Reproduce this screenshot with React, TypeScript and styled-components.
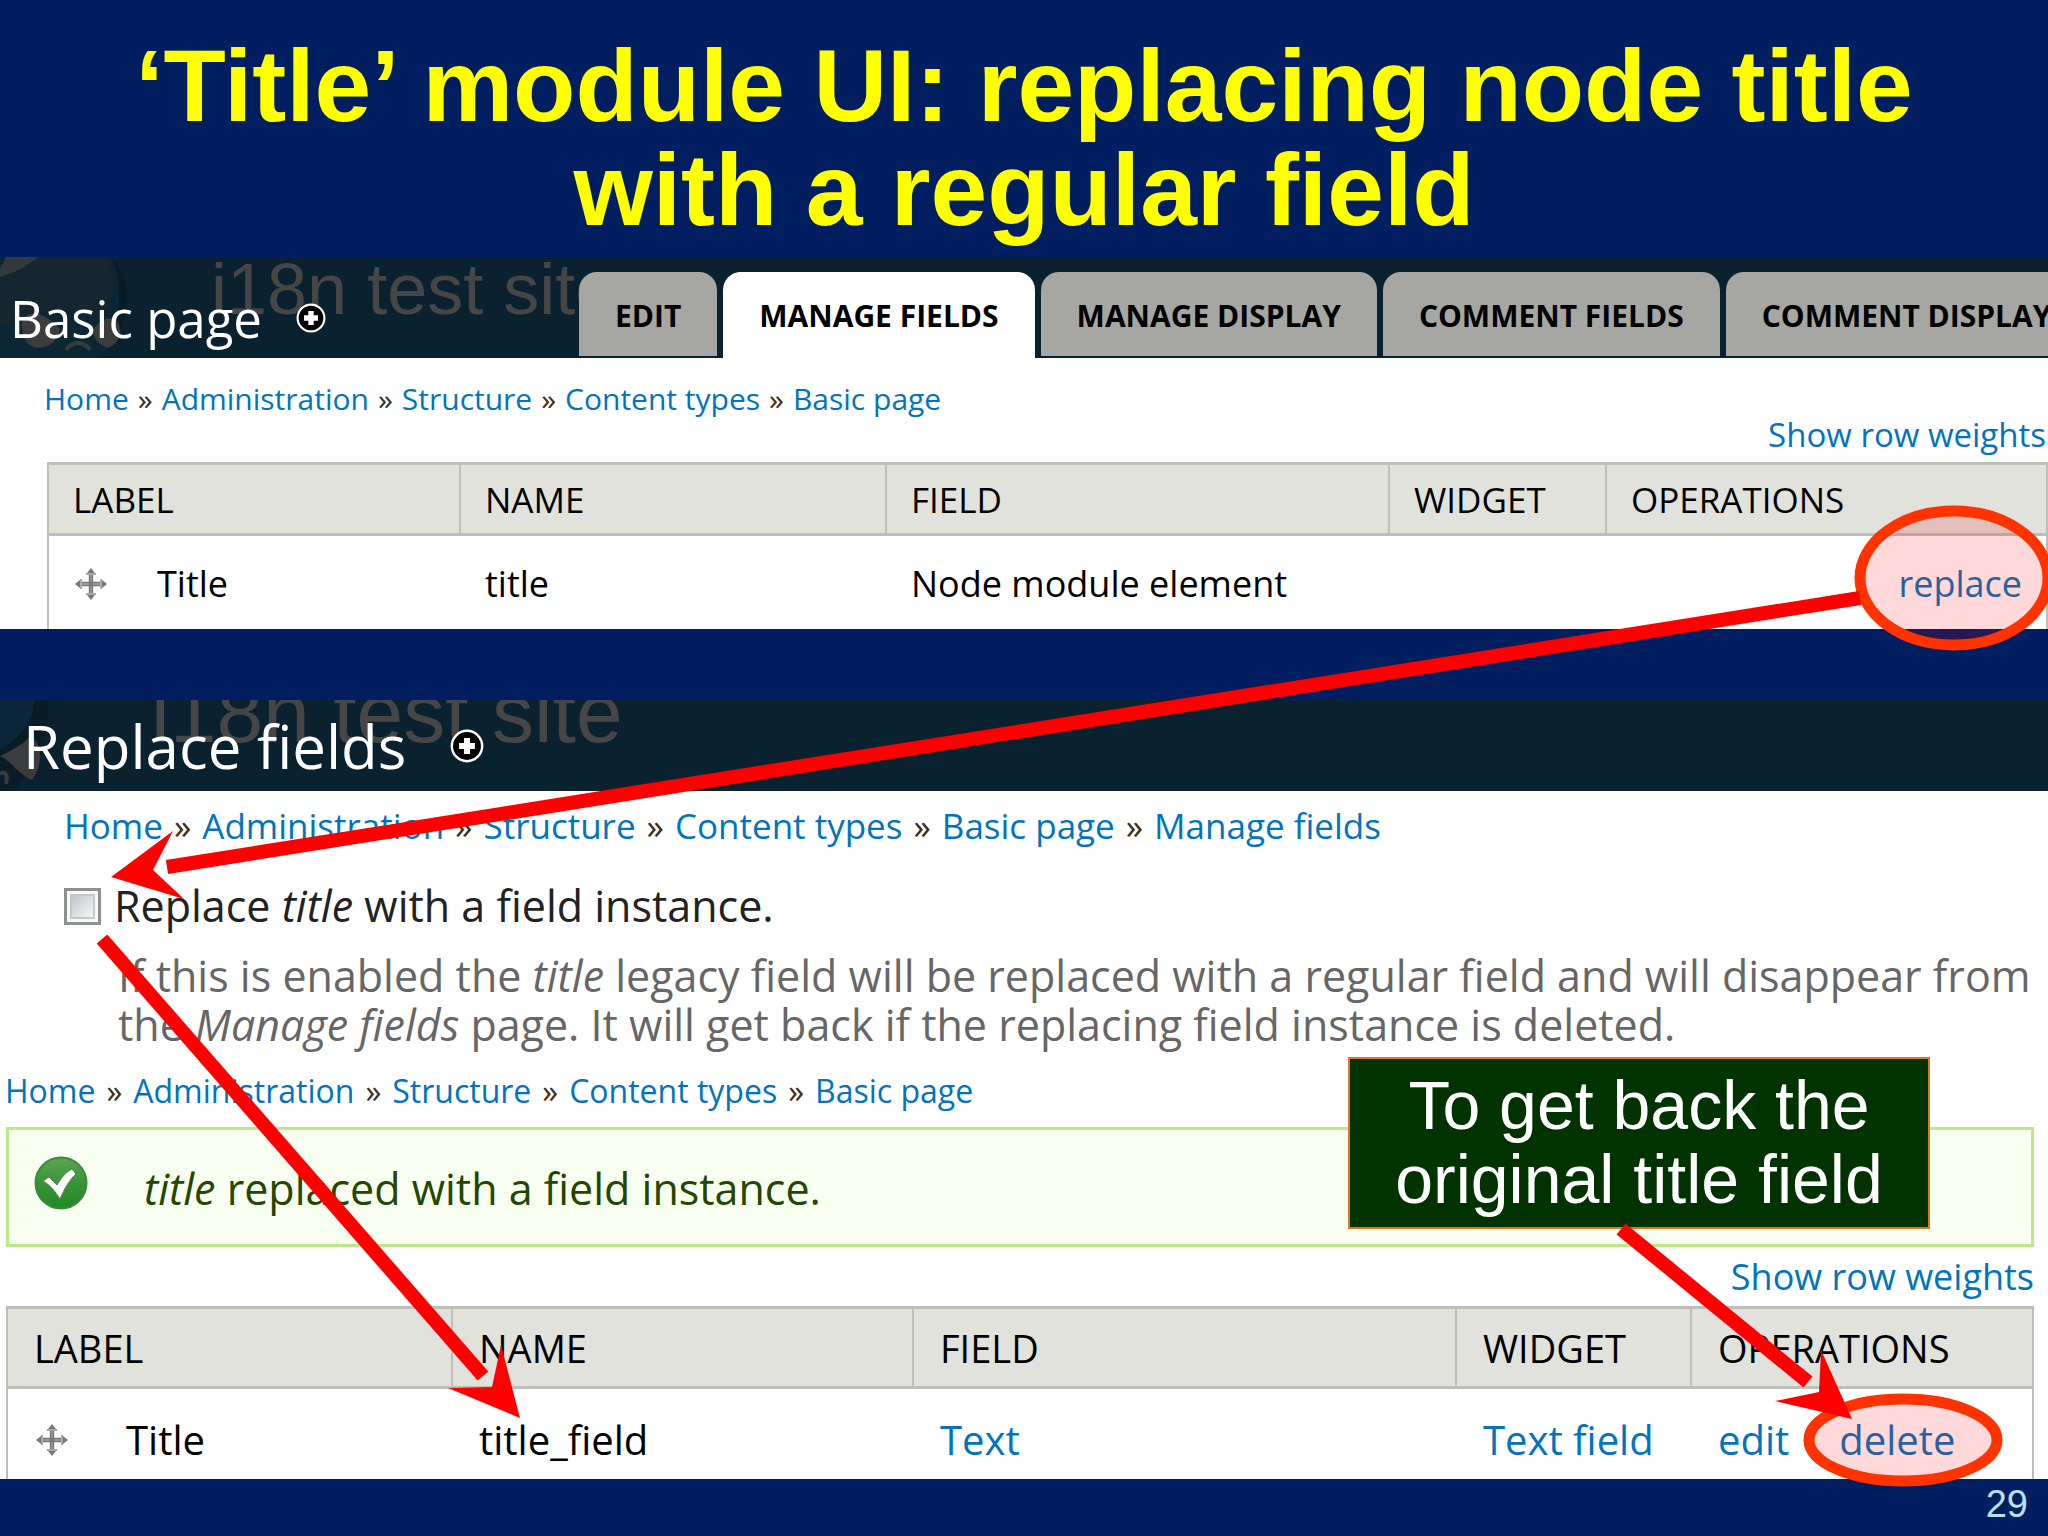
import React from "react";
import styled, { createGlobalStyle } from "styled-components";

const GlobalStyle = createGlobalStyle`
  *, *::before, *::after { box-sizing: border-box; }
  body { margin: 0; background: #001e60; }
`;

const ui = `"Open Sans", "Noto Sans", sans-serif`;
const arial = `"Liberation Sans", Arial, sans-serif`;

const Slide = styled.main`
  position: relative;
  min-height: 100vh;
  display: flex;
  flex-direction: column;
  overflow: hidden;
  background: #001e60;
  font-family: ${ui};
  color: #000;
`;

const SlideTitle = styled.h1`
  margin: 0;
  padding: 34px 80px 15px;
  font: bold 102px/104px ${arial};
  color: #ffff00;
  text-align: center;
`;

const Panel = styled.section<{ $gap?: number }>`
  position: relative;
  margin-top: ${(p) => p.$gap ?? 0}px;
  background: #fff;
`;

const Bar = styled.header<{ $height: number }>`
  position: relative;
  display: flex;
  align-items: flex-end;
  height: ${(p) => p.$height}px;
  overflow: hidden;
  background: #0a2230;
`;

const SiteName = styled.span<{ $left: number; $top: number; $size: number }>`
  position: absolute;
  left: ${(p) => p.$left}px;
  top: ${(p) => p.$top}px;
  font: ${(p) => p.$size}px/80px ${arial};
  color: #464646;
  white-space: nowrap;
`;

const Mascot = styled.svg`
  position: absolute;
  left: 0;
  top: 0;
`;

const BarHeading = styled.div<{ $large?: boolean }>`
  position: relative;
  display: flex;
  align-items: center;
  flex: 0 0 579px;
  gap: ${(p) => (p.$large ? 44 : 34)}px;
  padding: ${(p) => (p.$large ? "0 0 12px 23px" : "0 0 12px 10px")};
`;

const PageName = styled.h2<{ $large?: boolean }>`
  margin: 0;
  font-size: ${(p) => (p.$large ? 60 : 51)}px;
  line-height: ${(p) => (p.$large ? 66 : 56)}px;
  font-weight: 400;
  color: #fff;
  white-space: nowrap;
`;

const IconButton = styled.button`
  display: flex;
  padding: 0;
  border: 0;
  background: none;
`;

const Tabs = styled.nav`
  position: relative;
  display: flex;
  gap: 6px;
  height: 86px;
`;

const Tab = styled.a<{ $active?: boolean }>`
  flex: none;
  height: ${(p) => (p.$active ? 86 : 84)}px;
  padding: 0 36px;
  border-radius: 18px 18px 0 0;
  background: ${(p) => (p.$active ? "#fff" : "#a6a7a2")};
  color: #000;
  font-size: 30px;
  line-height: 87px;
  font-weight: 700;
  text-decoration: none;
  white-space: nowrap;
`;

const Crumbs = styled.nav<{ $size: number; $pad: string; $gap: number }>`
  display: flex;
  gap: ${(p) => p.$gap}px;
  padding: ${(p) => p.$pad};
  font-size: ${(p) => p.$size}px;
  line-height: 36px;
  color: #3b3020;
  white-space: nowrap;
`;

const Link = styled.a`
  color: #0074bd;
  text-decoration: none;
`;

const Weights = styled.div<{ $size: number; $pad: string }>`
  padding: ${(p) => p.$pad};
  font-size: ${(p) => p.$size}px;
  line-height: 36px;
  text-align: right;
`;

const TableWrap = styled.div<{ $pad: string }>`
  padding: ${(p) => p.$pad};
`;

const Table = styled.table<{ $large?: boolean }>`
  width: 100%;
  table-layout: fixed;
  border-collapse: separate;
  border-spacing: 0;
  border: 2px solid #bebfb9;
  border-width: 0 2px;

  th,
  td {
    padding: 0 ${(p) => (p.$large ? 26 : 24)}px;
    text-align: left;
    font-weight: 400;
    white-space: nowrap;
  }
  th {
    height: ${(p) => (p.$large ? 83 : 74)}px;
    border: solid #bebfb9;
    border-width: 3px 0 3px 2px;
    background: #e1e2dc;
    font-size: ${(p) => (p.$large ? 38 : 35)}px;
    text-transform: uppercase;
  }
  th:first-child {
    border-left: 0;
  }
  td {
    height: ${(p) => (p.$large ? 90 : 93)}px;
    padding-top: ${(p) => (p.$large ? 12 : 2)}px;
    padding-left: ${(p) => (p.$large ? 28 : 26)}px;
    font-size: ${(p) => (p.$large ? 40 : 36)}px;
    line-height: 50px;
  }
`;

const Col = styled.col<{ $width?: number }>`
  width: ${(p) => (p.$width ? `${p.$width}px` : "auto")};
`;

const LabelCell = styled.div<{ $gap: number }>`
  display: flex;
  align-items: center;
  gap: ${(p) => p.$gap}px;
`;

const Operations = styled.div<{ $end?: boolean }>`
  display: flex;
  gap: 50px;
  justify-content: ${(p) => (p.$end ? "flex-end" : "flex-start")};
`;

const CheckRow = styled.div`
  display: flex;
  align-items: center;
  gap: 13px;
  padding: 37px 0 0 64px;
  color: #222;
  font-size: 43px;
  line-height: 50px;
`;

const Checkbox = styled.input`
  appearance: none;
  width: 37px;
  height: 37px;
  margin: 0;
  border: 3px solid #8e8f8f;
  background: linear-gradient(135deg, #b4b9bf, #f4f4f4 80%);
  box-shadow: inset 0 0 0 3px #f8f8f8, inset 0 0 0 5px #c4c8cc;
`;

const Help = styled.p`
  margin: 0;
  padding: 20px 10px 0 118px;
  color: #666;
  font-size: 43px;
  line-height: 49px;
`;

const Status = styled.div`
  display: flex;
  align-items: flex-start;
  gap: 56px;
  height: 120px;
  margin: 18px 14px 0 6px;
  padding: 26px 0 0 25px;
  border: 3px solid #bce88a;
  background: #f8fff0;
  color: #234600;
  font-size: 43px;
  line-height: 65px;
`;

const Callout = styled.aside`
  position: absolute;
  right: 118px;
  bottom: 250px;
  width: 582px;
  padding: 9px 0 11px;
  border: 2px solid #e07820;
  background: #003300;
  color: #fff;
  font: 68px/74px ${arial};
  text-align: center;
`;

const Annotations = styled.svg`
  position: absolute;
  left: 0;
  top: 0;
  width: 100%;
  height: auto;
  pointer-events: none;
`;

const SlideFooter = styled.footer`
  padding: 5px 20px 11px;
  font: 38px/40px ${arial};
  color: #b9e0ee;
  text-align: right;
`;

const PlusIcon = ({ size }: { size: number }) => (
  <svg width={size} height={size} viewBox="0 0 28 28" aria-hidden="true">
    <circle cx="14" cy="14" r="12.5" fill="#000" stroke="#fff" strokeWidth="2" />
    <path d="M14 7.5v13M7.5 14h13" stroke="#fff" strokeWidth="5" />
  </svg>
);

const DragIcon = () => (
  <svg width="32" height="32" viewBox="0 0 32 32" aria-hidden="true">
    <g fill="none" stroke="#777" strokeWidth="2">
      <path d="M14.8 4v24M17.2 4v24M4 14.8h24M4 17.2h24" />
      <path d="M11 6h10M11 26h10M6 11v10M26 11v10" stroke="#a8a8a8" />
    </g>
    <path d="M16 0l4 5h-8zM16 32l4-5h-8zM0 16l5-4v8zM32 16l-5-4v8z" fill="#777" />
  </svg>
);

const OkIcon = () => (
  <svg width="54" height="54" viewBox="0 0 54 54" aria-hidden="true">
    <defs>
      <linearGradient id="ok" x1="0" y1="0" x2="0" y2="1">
        <stop offset="0" stopColor="#5aa552" />
        <stop offset="0.5" stopColor="#3b9338" />
        <stop offset="1" stopColor="#1f8a1f" />
      </linearGradient>
    </defs>
    <circle cx="27" cy="27" r="25.5" fill="url(#ok)" stroke="#3d8a3a" strokeWidth="2" />
    <path d="M9 25l6-4 8 8C27 22 32 16 38 13l4 5C35 24 31 32 26 43C21 35 16 29 9 25z" fill="#fff" stroke="#5d7f5a" strokeWidth="1" />
  </svg>
);

const Crumb = ({ items }: { items: string[] }) => (
  <>
    {items.map((item, i) => (
      <React.Fragment key={item}>
        {i > 0 && <span>»</span>}
        <Link href="#">{item}</Link>
      </React.Fragment>
    ))}
  </>
);

const path = ["Home", "Administration", "Structure", "Content types", "Basic page"];
const tabs = ["EDIT", "MANAGE FIELDS", "MANAGE DISPLAY", "COMMENT FIELDS", "COMMENT DISPLAY"];
const columns = ["Label", "Name", "Field", "Widget", "Operations"];

const Head = ({ widths }: { widths: (number | undefined)[] }) => (
  <>
    <colgroup>
      {widths.map((w, i) => (
        <Col key={i} $width={w} />
      ))}
    </colgroup>
    <thead>
      <tr>
        {columns.map((c) => (
          <th key={c} scope="col">{c}</th>
        ))}
      </tr>
    </thead>
  </>
);

export default function App() {
  return (
    <>
      <GlobalStyle />
      <Slide>
        <SlideTitle>
          ‘Title’ module UI: replacing node title
          <br />
          with a regular field
        </SlideTitle>

        <Panel>
          <Bar $height={101}>
            <Mascot width="140" height="101" viewBox="0 0 140 101" aria-hidden="true">
              <path d="M0 0H108C124 18 128 46 119 70C113 88 104 98 96 101H0z" fill="#0b2635" />
              <path d="M36 0H104C118 16 116 40 104 58C84 52 50 44 0 72V20C20 16 28 8 36 0z" fill="#14262f" />
              <path d="M112 0C132 22 134 62 108 94C120 62 124 28 112 0z" fill="#091b26" />
              <path d="M6 0H38C28 8 18 15 0 20V12z" fill="#33393b" />
              <path d="M22 62C34 50 48 60 60 72C58 84 48 91 38 91C26 90 20 78 22 62z" fill="#3a3c3e" />
              <path d="M92 74C100 62 108 60 116 62C124 74 120 86 108 91C100 89 94 82 92 74z" fill="#3a3c3e" />
              <path d="M66 93C72 84 84 84 90 93" fill="none" stroke="#3a3c3e" strokeWidth="4" />
            </Mascot>
            <SiteName $left={211} $top={-8} $size={72}>i18n test site</SiteName>
            <BarHeading>
              <PageName>Basic page</PageName>
              <IconButton type="button" aria-label="Add shortcut"><PlusIcon size={30} /></IconButton>
            </BarHeading>
            <Tabs>
              {tabs.map((t, i) => (
                <Tab key={t} href="#" $active={i === 1}>{t}</Tab>
              ))}
            </Tabs>
          </Bar>
          <Crumbs $size={30} $pad="23px 0 0 44px" $gap={9}>
            <Crumb items={path} />
          </Crumbs>
          <Weights $size={33} $pad="0 2px 0 0">
            <Link href="#">Show row weights</Link>
          </Weights>
          <TableWrap $pad="9px 0 0 47px">
            <Table>
              <Head widths={[410, 426, undefined, 217, 441]} />
              <tbody>
                <tr>
                  <td><LabelCell $gap={50}><DragIcon />Title</LabelCell></td>
                  <td>title</td>
                  <td>Node module element</td>
                  <td />
                  <td><Operations $end><Link href="#">replace</Link></Operations></td>
                </tr>
              </tbody>
            </Table>
          </TableWrap>
        </Panel>

        <Panel $gap={71}>
          <Bar $height={91}>
            <Mascot width="60" height="91" viewBox="0 0 60 91" aria-hidden="true">
              <path d="M0 0H34C34 20 22 36 0 50z" fill="#0b263a" />
              <path d="M34 0H48C50 34 40 62 14 91H0V50C22 36 34 20 34 0z" fill="#0a1c28" />
              <path d="M0 56C12 50 24 44 30 36C42 42 44 64 32 80C18 74 10 60 0 56z" fill="#3a3c3e" />
              <path d="M0 74C6 70 8 76 6 84" fill="none" stroke="#3a3c3e" strokeWidth="4" />
            </Mascot>
            <SiteName $left={151} $top={-27} $size={84}>i18n test site</SiteName>
            <BarHeading $large>
              <PageName $large>Replace fields</PageName>
              <IconButton type="button" aria-label="Add shortcut"><PlusIcon size={34} /></IconButton>
            </BarHeading>
          </Bar>
          <Crumbs $size={35} $pad="17px 0 0 64px" $gap={11}>
            <Crumb items={[...path, "Manage fields"]} />
          </Crumbs>
          <CheckRow>
            <Checkbox type="checkbox" id="replace-title" />
            <label htmlFor="replace-title">Replace <em>title</em> with a field instance.</label>
          </CheckRow>
          <Help>
            If this is enabled the <em>title</em> legacy field will be replaced with a regular field and will
            disappear from the <em>Manage fields</em> page. It will get back if the replacing field instance is
            deleted.
          </Help>
          <Crumbs $size={32} $pad="24px 0 0 5px" $gap={11}>
            <Crumb items={path} />
          </Crumbs>
          <Status role="status">
            <OkIcon />
            <span><em>title</em> replaced with a field instance.</span>
          </Status>
          <Weights $size={36} $pad="12px 14px 0 0">
            <Link href="#">Show row weights</Link>
          </Weights>
          <TableWrap $pad="11px 14px 0 6px">
            <Table $large>
              <Head widths={[443, 461, undefined, 235, 342]} />
              <tbody>
                <tr>
                  <td><LabelCell $gap={58}><DragIcon />Title</LabelCell></td>
                  <td>title_field</td>
                  <td><Link href="#">Text</Link></td>
                  <td><Link href="#">Text field</Link></td>
                  <td>
                    <Operations>
                      <Link href="#">edit</Link>
                      <Link href="#">delete</Link>
                    </Operations>
                  </td>
                </tr>
              </tbody>
            </Table>
          </TableWrap>
          <Callout>
            To get back the
            <br />
            original title field
          </Callout>
        </Panel>

        <SlideFooter>29</SlideFooter>

        <Annotations viewBox="0 0 2048 1536" aria-hidden="true">
          <g fill="#ff0000" fillOpacity="0.15" stroke="#ff3300" strokeWidth="11">
            <ellipse cx="1954" cy="578" rx="94" ry="67" />
            <ellipse cx="1903" cy="1440" rx="94" ry="41" />
          </g>
          <g stroke="#ff0000" strokeWidth="14">
            <path d="M1860 598L167 867" />
            <path d="M102 939L483 1376" />
            <path d="M1621 1229L1808 1382" />
          </g>
          <g fill="#ff0000">
            <path d="M111 877L173 831L153 870L184 899z" />
            <path d="M520 1418L501 1345L492 1387L448 1388z" />
            <path d="M1852 1419L1821 1350L1819 1392L1775 1401z" />
          </g>
        </Annotations>
      </Slide>
    </>
  );
}
